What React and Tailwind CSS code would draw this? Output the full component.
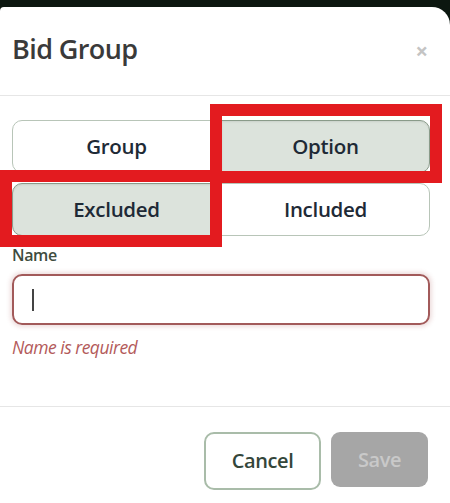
const font = { fontFamily: '"Open Sans", "Noto Sans", sans-serif' };

function Seg({ label, active, side }) {
  const round = side === 'left' ? 'rounded-l-[10px]' : 'rounded-r-[10px]';
  return (
    <button
      className={`flex h-[53px] items-center justify-center border text-[20.5px] font-semibold tracking-[-0.3px] text-[#1e2a36] ${round} ${
        active ? 'border-[#8a9b8a] bg-[#dce3dc] shadow-[inset_0_1px_2px_rgba(0,0,0,0.08)]' : 'border-[#b8c5b8] bg-white'
      }`}
    >
      {label}
    </button>
  );
}

export default function App() {
  return (
    <div className="relative h-[503px] w-[450px] overflow-hidden bg-[#0c1710] pt-[7px]" style={font}>
      <div className="h-full rounded-tl-[4px] rounded-tr-[18px] bg-white">
        <div className="flex h-[89px] items-center justify-between border-b border-[#e6e6e6] pl-3 pr-5 pb-[3px]">
          <h1 className="text-[27px] font-semibold tracking-[-0.6px] text-[#3a3a3a]">Bid Group</h1>
          <span className="mr-[2px] text-[22px] font-bold leading-none text-[#c4c4c4]">×</span>
        </div>

        <div className="pl-3 pr-5 pt-[24px]">
          <div className="grid grid-cols-2">
            <Seg label="Group" side="left" />
            <Seg label="Option" side="right" active />
          </div>
          <div className="mt-[10px] grid grid-cols-2">
            <Seg label="Excluded" side="left" active />
            <Seg label="Included" side="right" />
          </div>

          <label className="mt-[7px] block text-[16px] font-semibold tracking-[-0.4px] text-[#3e4c3e]">Name</label>
          <div className="mt-[7px] flex h-[51px] items-center rounded-[10px] border-2 border-[#a25a5a] px-[18px] shadow-[0_0_4px_2px_rgba(170,90,90,0.2)]">
            <span className="h-[22px] w-[2px] bg-[#444]" />
          </div>
          <p className="mt-[9px] text-[17.5px] italic tracking-[-0.5px] text-[#b35a5a]">Name is required</p>
        </div>

        <div className="mt-[46px] flex justify-end gap-[10px] border-t border-[#e6e6e6] pl-3 pr-[22px] pt-[25px]">
          <button className="h-[58px] w-[117px] rounded-[10px] border-2 border-[#a9bca9] bg-white text-[20px] font-semibold tracking-[-0.4px] text-[#34463a]">
            Cancel
          </button>
          <button className="h-[55px] w-[97px] rounded-[9px] bg-[#a6a6a6] text-[20px] font-semibold tracking-[-0.4px] text-[#c9c9c9]">
            Save
          </button>
        </div>
      </div>

      <div className="pointer-events-none absolute left-[210px] top-[104px] h-[79px] w-[232px] border-[12px] border-[#e31b1f]" />
      <div className="pointer-events-none absolute left-0 top-[170px] h-[77px] w-[222px] border-[12px] border-[#e31b1f]" />
    </div>
  );
}
